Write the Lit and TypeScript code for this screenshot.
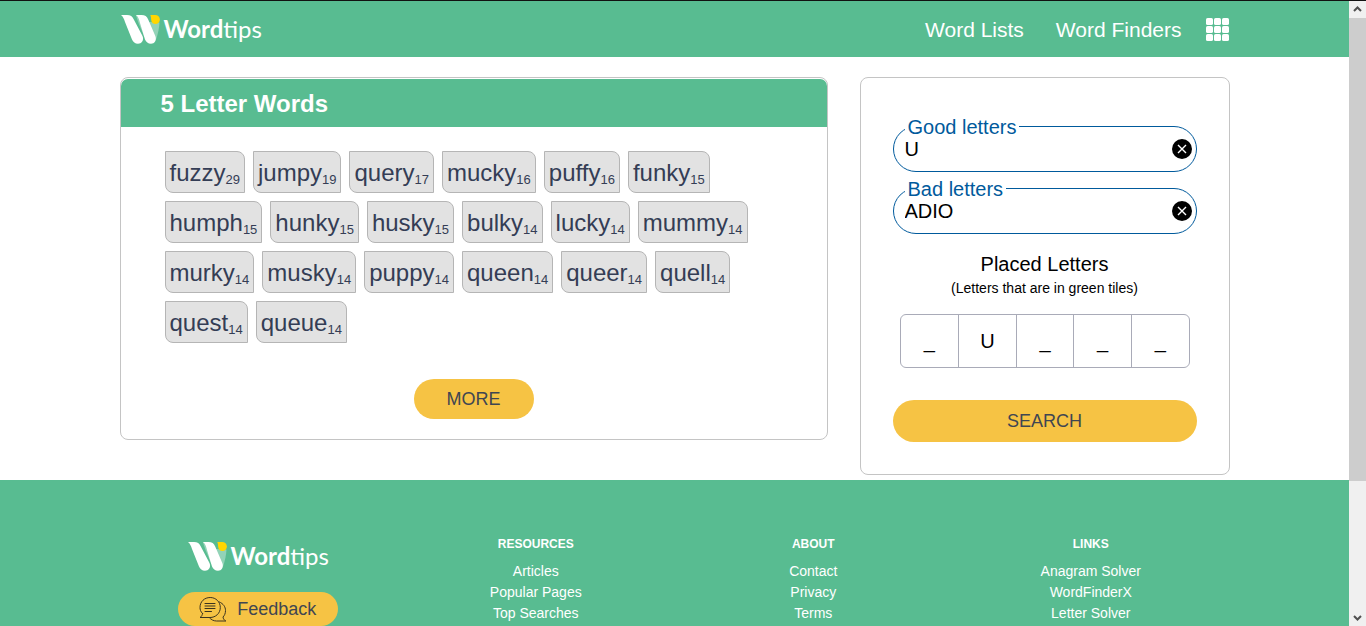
import { LitElement, html, svg, css } from "lit";
import { customElement } from "lit/decorators.js";

const WORDS: [string, number][] = [
  ["fuzzy", 29], ["jumpy", 19], ["query", 17], ["mucky", 16], ["puffy", 16],
  ["funky", 15], ["humph", 15], ["hunky", 15], ["husky", 15], ["bulky", 14],
  ["lucky", 14], ["mummy", 14], ["murky", 14], ["musky", 14], ["puppy", 14],
  ["queen", 14], ["queer", 14], ["quell", 14], ["quest", 14], ["queue", 14],
];

const PLACED = ["_", "U", "_", "_", "_"];

const COLUMNS = [
  { title: "RESOURCES", links: ["Articles", "Popular Pages", "Top Searches"] },
  { title: "ABOUT", links: ["Contact", "Privacy", "Terms"] },
  { title: "LINKS", links: ["Anagram Solver", "WordFinderX", "Letter Solver"] },
];

@customElement("word-logo")
export class WordLogo extends LitElement {
  static styles = css`
    :host { display: inline-block; }
    .logo {
      display: flex;
      align-items: center;
      gap: 4px;
      color: #fff;
      font: 400 24px/30px Lato, sans-serif;
      text-decoration: none;
    }
    .mark { display: block; width: 39px; height: 30px; }
    .strong { font-weight: 700; }
  `;
  render() {
    return html`<a class="logo" href="#">
      <svg class="mark" viewBox="0 0 39 30" aria-hidden="true">
        <path fill="#fff" fill-opacity=".35" d="M28 8 L38.500 8.500 C38.200 14 37 20 35 25.500 L31 27z" />
        <path fill="#fff" fill-opacity=".35" d="M14.800 1 H20 L27 26 L23 22 L17.500 9z" />
        <path fill="#fff" d="M0 1 H6 C9.500 1 11.500 2.200 12.800 5.500 L21.500 22 C23.300 26.500 20.500 29.700 17 29.700 C14 29.700 12.200 28.200 11 25.500 L4 8 C3 5 2 2.500 0 1z" />
        <path fill="#fff" d="M15 1 H20.500 C24 1 26 2.200 27.200 5.500 L34.300 22 C36 26.500 33.500 29.700 30 29.700 C27 29.700 25.200 28.200 24 25.500 L19 9 C18 5 17 2.500 15 1z" />
        <path fill="#ffd600" d="M29.300 1 H34 C37 1 38.900 3 38.900 5.500 C38.900 8.200 37 10 34.500 10 C32 10 30.500 8.500 30.200 6 C30 4 30 2.500 29.300 1z" />
      </svg>
      <span><span class="strong">Word</span>tips</span>
    </a>`;
  }
}

@customElement("app-root")
export class AppRoot extends LitElement {
  static styles = css`
    :host {
      display: flex;
      height: 100vh;
      overflow: hidden;
      background: #fff;
      color: #000;
      font-family: "Liberation Sans", Arial, sans-serif;
    }
    * { box-sizing: border-box; }
    a { color: inherit; text-decoration: none; }
    button, input { font-family: inherit; color: inherit; margin: 0; }
    button { cursor: pointer; }
    .page { flex: 1; min-width: 0; display: flex; flex-direction: column; }
    .wrap { width: 100%; max-width: 1110px; margin: 0 auto; }

    .header { background: #58bc91; border-top: 1px solid #111; color: #fff; }
    .bar { display: flex; align-items: center; height: 56px; padding: 0 1px; }
    .nav { display: flex; align-items: center; gap: 32px; margin-left: auto; padding-top: 2px; font-size: 21px; line-height: 24px; }
    .apps { display: block; padding: 0; border: 0; margin-left: 24px; background: none; }
    .apps svg { display: block; width: 23px; height: 23px; }

    .main { display: grid; grid-template-columns: minmax(0, 1fr) 370px; gap: 32px; align-items: start; padding: 20px 0 5px; }
    .card { border: 1px solid #c4c4c4; border-radius: 8px; }
    .results { padding-top: 1px; }
    .title {
      margin: 0;
      padding: 2px 40px 0;
      border-radius: 7px 7px 0 0;
      background: #58bc91;
      color: #fff;
      font-size: 24px;
      line-height: 46px;
    }
    .words { display: flex; flex-wrap: wrap; gap: 8px; margin: 0; padding: 24px 44px 36px; list-style: none; }
    .word {
      display: block;
      height: 42px;
      padding: 0 4px;
      border: 1px solid #b5b5b5;
      border-radius: 0 8px;
      background: #e2e2e2;
      color: #343d55;
      font-size: 24px;
      line-height: 42px;
    }
    .score { font-size: 13px; position: relative; top: 3px; line-height: 1; }
    .pill { display: block; border: 0; padding: 0; border-radius: 21px; background: #f6c344; color: #3f4652; font-size: 18px; }
    .more { width: 120px; height: 40px; margin: 0 auto 20px; }

    .form { padding: 37px 32px 32px; }
    .field { min-width: 0; margin: 0 0 5px; padding: 0 4px 11px 9px; border: 1px solid #005a9c; border-radius: 23px; }
    .legend { margin-left: 2px; padding: 2px 3px 0; color: #005a9c; font-size: 20px; line-height: 21px; }
    .entry { display: flex; align-items: center; height: 22px; }
    .text { flex: 1; min-width: 0; height: 22px; padding: 0 2px; border: 0; background: none; font-size: 20px; outline: none; }
    .clear { display: block; padding: 0; border: 0; background: none; }
    .clear svg { display: block; width: 20px; height: 20px; }
    .placed { margin: 0; padding: 0; border: 0; text-align: center; }
    .placed-title { width: 100%; padding: 13px 0 14px; font-size: 20px; line-height: 24px; }
    .hint { display: block; font-size: 14px; line-height: 24px; }
    .tiles { display: grid; grid-template-columns: repeat(5, 1fr); height: 54px; margin: 0 7px 32px; border: 1px solid #a9abb8; border-radius: 6px; overflow: hidden; }
    .tile { min-width: 0; padding: 0; border: 0; background: none; font-size: 20px; text-align: center; outline: none; }
    .tile + .tile { border-left: 1px solid #a9abb8; }
    .search { width: 100%; height: 42px; }

    .footer { flex: 1; background: #58bc91; color: #fff; }
    .columns { display: grid; grid-template-columns: repeat(4, 1fr); padding-top: 54px; text-align: center; }
    .brand { display: flex; flex-direction: column; align-items: center; gap: 21px; padding-top: 7px; }
    .feedback { display: flex; align-items: center; gap: 10px; width: 160px; height: 34px; padding: 0 21px; border-radius: 17px; }
    .feedback svg { width: 28px; height: 26px; }
    .heading { margin: 0 0 7px; font-size: 12px; line-height: 20px; }
    .links { margin: 0; padding: 0; list-style: none; font-size: 14px; line-height: 21px; }

    .scroll { display: flex; flex-direction: column; width: 17px; background: #f0f0f0; border-top: 1px solid #111; }
    .arrow { display: block; width: 17px; height: 17px; }
    .thumb { flex: 0 0 74%; width: 17px; background: #cdcdcd; }
    .track { flex: 1; }
  `;

  private field(id: string, label: string, value: string) {
    return html`<fieldset class="field">
      <legend class="legend"><label for=${id}>${label}</label></legend>
      <div class="entry">
        <input class="text" id=${id} type="text" .value=${value} />
        <button class="clear" type="button" aria-label="Clear ${label}">
          <svg viewBox="0 0 20 20">
            <circle cx="10" cy="10" r="10" />
            <path d="M6 6 L14 14 M14 6 L6 14" stroke="#fff" stroke-width="1.4" />
          </svg>
        </button>
      </div>
    </fieldset>`;
  }

  render() {
    return html`
      <div class="page">
        <header class="header">
          <div class="wrap bar">
            <word-logo></word-logo>
            <nav class="nav">
              <a href="#">Word Lists</a>
              <a href="#">Word Finders</a>
            </nav>
            <button class="apps" type="button" aria-label="Apps">
              <svg viewBox="0 0 23 23" fill="#fff">
                ${[0, 1, 2].map((r) => [0, 1, 2].map((c) => svg`<rect x=${c * 8} y=${r * 8} width="7" height="7" rx="1.6" />`))}
              </svg>
            </button>
          </div>
        </header>

        <main class="wrap main">
          <section class="card results">
            <h1 class="title">5 Letter Words</h1>
            <ul class="words">
              ${WORDS.map(([w, n]) => html`<li><a class="word" href="#">${w}<span class="score">${n}</span></a></li>`)}
            </ul>
            <button class="pill more" type="button">MORE</button>
          </section>

          <form class="card form">
            ${this.field("good", "Good letters", "U")}
            ${this.field("bad", "Bad letters", "ADIO")}
            <fieldset class="placed">
              <legend class="placed-title">Placed Letters<span class="hint">(Letters that are in green tiles)</span></legend>
              <div class="tiles">
                ${PLACED.map((l, i) => html`<input class="tile" type="text" maxlength="1" aria-label="Letter ${i + 1}" .value=${l} />`)}
              </div>
            </fieldset>
            <button class="pill search" type="button">SEARCH</button>
          </form>
        </main>

        <footer class="footer">
          <div class="wrap columns">
            <div class="brand">
              <word-logo></word-logo>
              <button class="pill feedback" type="button">
                <svg viewBox="0 0 28 26" fill="none" stroke="#3b3320" stroke-width="1" stroke-linejoin="round" stroke-linecap="round" aria-hidden="true">
                  <path d="M3.500 17.500 C1.500 15.500 1 13.500 1 11.500 C1 5.500 5.500 1.500 11.200 1.500 C17 1.500 21.300 6 21.300 11.500 C21.300 17.500 16.500 21.500 11 21.500 H1 C2.800 20.500 3.300 19 3.500 17.500z" />
                  <path d="M20.500 6 C24.500 7.800 26.500 11 26.500 14.500 C26.500 17.500 25.500 19.500 24 21 C24.200 22.700 25 24 26.800 25 H17.500 C14.500 25 12 23.500 10.500 21.800" />
                  <path d="M6 7.500 H16 M6 10 H16 M6 12.500 H16 M6 15.500 H12.500" />
                </svg>
                Feedback
              </button>
            </div>
            ${COLUMNS.map((c) => html`<nav>
              <h2 class="heading">${c.title}</h2>
              <ul class="links">${c.links.map((l) => html`<li><a href="#">${l}</a></li>`)}</ul>
            </nav>`)}
          </div>
        </footer>
      </div>
      <div class="scroll" aria-hidden="true">
        <svg class="arrow" viewBox="0 0 17 17"><path d="M5 10 L8.500 6.500 L12 10" fill="none" stroke="#505050" stroke-width="2" /></svg>
        <div class="thumb"></div>
        <div class="track"></div>
        <svg class="arrow" viewBox="0 0 17 17"><path d="M5 7 L8.500 10.500 L12 7" fill="none" stroke="#505050" stroke-width="2" /></svg>
      </div>
    `;
  }
}
